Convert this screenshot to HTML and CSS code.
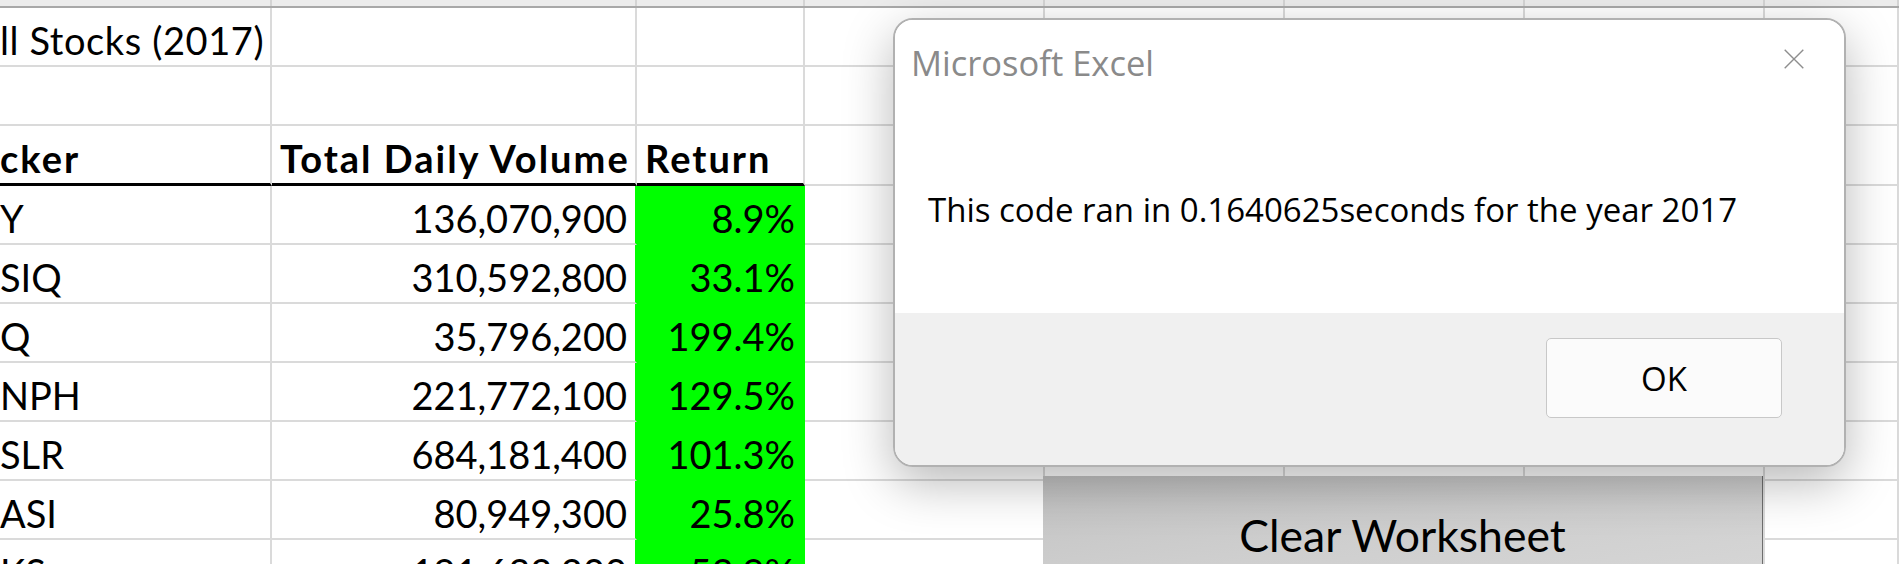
FILE: index.html
```html
<!DOCTYPE html>
<html lang="en">
<head>
<meta charset="utf-8">
<title>Excel - Microsoft Excel message</title>
<link rel="stylesheet" href="styles.css">
</head>
<body>
<div class="sheet">
  <div class="colhead">
    <div class="ch"></div><div class="ch"></div><div class="ch"></div><div class="ch"></div>
    <div class="ch"></div><div class="ch"></div><div class="ch"></div><div class="ch"></div>
  </div>
  <div class="grid">
    <!-- row 1 -->
    <div class="c title-cell">ll Stocks (2017)</div><div class="c"></div><div class="c"></div><div class="c"></div><div class="c"></div><div class="c"></div><div class="c"></div><div class="c"></div>
    <!-- row 2 -->
    <div class="c"></div><div class="c"></div><div class="c"></div><div class="c"></div><div class="c"></div><div class="c"></div><div class="c"></div><div class="c"></div>
    <!-- row 3 -->
    <div class="c hd tick thick">cker</div><div class="c hd thick">Total Daily Volume</div><div class="c hd thick">Return</div><div class="c"></div><div class="c"></div><div class="c"></div><div class="c"></div><div class="c"></div>
    <!-- data rows -->
    <div class="c tick">Y</div><div class="c num vol">136,070,900</div><div class="c num ret">8.9%</div><div class="c"></div><div class="c"></div><div class="c"></div><div class="c"></div><div class="c"></div>
    <div class="c tick">SIQ</div><div class="c num vol">310,592,800</div><div class="c num ret">33.1%</div><div class="c"></div><div class="c"></div><div class="c"></div><div class="c"></div><div class="c"></div>
    <div class="c tick">Q</div><div class="c num vol">35,796,200</div><div class="c num ret">199.4%</div><div class="c"></div><div class="c"></div><div class="c"></div><div class="c"></div><div class="c"></div>
    <div class="c tick">NPH</div><div class="c num vol">221,772,100</div><div class="c num ret">129.5%</div><div class="c"></div><div class="c"></div><div class="c"></div><div class="c"></div><div class="c"></div>
    <div class="c tick">SLR</div><div class="c num vol">684,181,400</div><div class="c num ret">101.3%</div><div class="c"></div><div class="c"></div><div class="c"></div><div class="c"></div><div class="c"></div>
    <div class="c tick">ASI</div><div class="c num vol">80,949,300</div><div class="c num ret">25.8%</div><div class="c"></div><div class="c"></div><div class="c"></div><div class="c"></div><div class="c"></div>
    <div class="c tick">KS</div><div class="c num vol">191,632,200</div><div class="c num ret">53.9%</div><div class="c"></div><div class="c"></div><div class="c"></div><div class="c"></div><div class="c"></div>
  </div>
</div>

<div class="macro-btn">Clear Worksheet</div>

<div class="dialog" role="dialog" aria-label="Microsoft Excel">
  <div class="dlg-body">
    <div class="dlg-title-row">
      <span class="dlg-title">Microsoft Excel</span>
      <svg class="dlg-close" width="20" height="20" viewBox="0 0 20 20" aria-hidden="true">
        <path d="M0.7 0.7 L19.3 19.3 M19.3 0.7 L0.7 19.3" stroke="#8e8e8e" stroke-width="1.4" fill="none"/>
      </svg>
    </div>
    <p class="dlg-msg">This code ran in 0.1640625seconds for the year 2017</p>
  </div>
  <div class="dlg-footer">
    <button class="dlg-ok" type="button">OK</button>
  </div>
</div>
</body>
</html>
```

FILE: styles.css
```css
html, body {
  margin: 0;
  padding: 0;
}
body {
  width: 1899px;
  height: 564px;
  overflow: hidden;
  position: relative;
  background: #ffffff;
  font-family: "Lato", "Liberation Sans", sans-serif;
  color: #000;
}

/* ---------- worksheet ---------- */
.sheet {
  width: 1899px;
}
.colhead {
  display: grid;
  grid-template-columns: 272px 365px 168px 240px 240px 240px 240px 1fr;
  height: 6px;
  background: #ececec;
  border-bottom: 2px solid #a8a8a8;
}
.ch {
  border-right: 2px solid #d4d4d4;
}
.grid {
  display: grid;
  grid-template-columns: 272px 365px 168px 240px 240px 240px 240px 1fr;
  grid-template-rows: 59px 59px 60px repeat(7, 59px);
}
.c {
  box-sizing: border-box;
  border-right: 2px solid #dadada;
  border-bottom: 2px solid #dadada;
  font-size: 38px;
  line-height: 65px;
  height: 100%;
  padding: 0 8px;
  white-space: nowrap;
  overflow: hidden;
}
.title-cell {
  padding-left: 0;
  letter-spacing: 0.6px;
  overflow: visible;
}
.tick {
  padding-left: 0;
  overflow: visible;
}
.hd {
  font-weight: 700;
  letter-spacing: 2px;
}
.thick {
  border-bottom: 3px solid #000;
}
.num {
  text-align: right;
}
.vol {
  border-right-color: #00ff00;
}
.ret {
  background: #00ff00;
  border-right-color: #00ff00;
  border-bottom-color: #00ff00;
}

/* ---------- form button on the sheet ---------- */
.macro-btn {
  position: absolute;
  left: 1043px;
  top: 476px;
  width: 720px;
  height: 150px;
  box-sizing: border-box;
  padding-top: 34px;
  background: linear-gradient(172deg, #c2c2c2 0%, #cfcfcf 45%, #dadada 100%);
  border-right: 1px solid #6e6e6e;
  text-align: center;
  font-size: 44.5px;
  line-height: 50px;
}

/* ---------- message box ---------- */
.dialog {
  position: absolute;
  left: 893px;
  top: 18px;
  width: 953px;
  height: 449px;
  box-sizing: border-box;
  border: 2px solid #b1b1b1;
  border-radius: 20px;
  overflow: hidden;
  display: flex;
  flex-direction: column;
  box-shadow: 0 16px 50px rgba(0, 0, 0, 0.28);
  font-family: "Open Sans", "Noto Sans", sans-serif;
}
.dlg-body {
  flex: 0 0 293px;
  box-sizing: border-box;
  background: #ffffff;
  padding: 23px 40px 0 16px;
}
.dlg-title-row {
  display: flex;
  justify-content: space-between;
  align-items: flex-start;
  height: 33px;
}
.dlg-title {
  font-size: 34.5px;
  line-height: 33px;
  margin-top: 3px;
  color: #8a8a8a;
}
.dlg-close {
  display: block;
  margin-top: 6px;
}
.dlg-msg {
  margin: 117px 0 0 17px;
  font-size: 33px;
  line-height: 33px;
  color: #000;
}
.dlg-footer {
  flex: 1;
  background: #f0f0f0;
  display: flex;
  justify-content: flex-end;
  align-items: flex-start;
  padding: 25px 62px 0 0;
}
.dlg-ok {
  width: 236px;
  height: 80px;
  box-sizing: border-box;
  border: 1px solid #c8c8c8;
  border-radius: 5px;
  background: #fbfbfb;
  font-family: "Open Sans", "Noto Sans", sans-serif;
  font-size: 33px;
  color: #000;
  padding: 0;
}
```
